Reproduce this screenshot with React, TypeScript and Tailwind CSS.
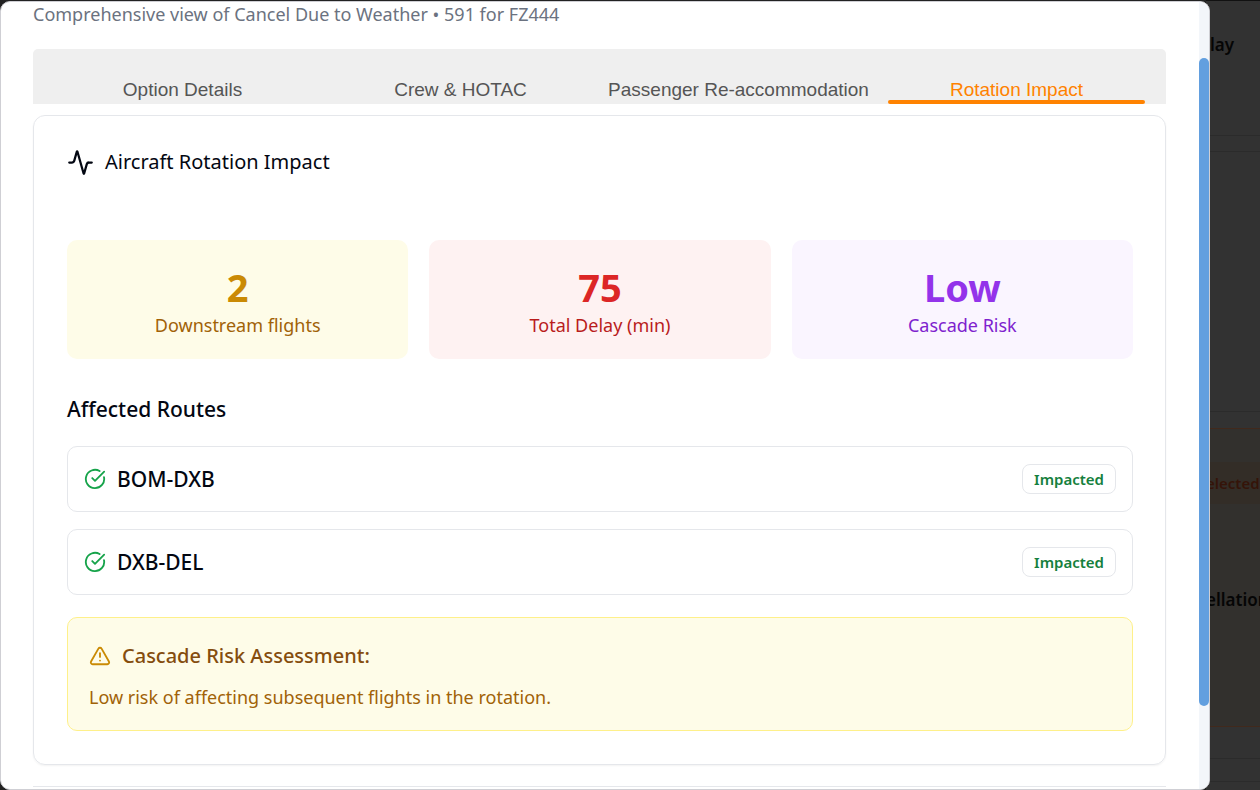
import { Activity, CircleCheckBig, TriangleAlert } from "lucide-react";

const tabs = ["Option Details", "Crew & HOTAC", "Passenger Re-accommodation", "Rotation Impact"];

const stats = [
  { value: "2", label: "Downstream flights", box: "bg-[#fefce8]", strong: "text-[#ca8a04]", soft: "text-[#a16207]" },
  { value: "75", label: "Total Delay (min)", box: "bg-[#fef2f2]", strong: "text-[#dc2626]", soft: "text-[#b91c1c]" },
  { value: "Low", label: "Cascade Risk", box: "bg-[#faf5ff]", strong: "text-[#9333ea]", soft: "text-[#7e22ce]" },
];

const routes = ["BOM-DXB", "DXB-DEL"];

function Tabs() {
  return (
    <div
      role="tablist"
      className="mt-[23px] grid grid-cols-4 gap-[21px] rounded-t-[5px] bg-[#efefef] px-[21px] pt-[30px] font-['Liberation_Sans',sans-serif] text-[19px] leading-[22px] text-[#555555]"
    >
      {tabs.map((tab, i) => {
        const active = i === 3;
        return (
          <button
            key={tab}
            type="button"
            role="tab"
            aria-selected={active}
            className={
              active
                ? "relative flex justify-center pb-[3px] whitespace-nowrap text-[#ff8200]"
                : "flex justify-center pb-[3px] whitespace-nowrap"
            }
          >
            {tab}
            {active && <span className="absolute inset-x-0 bottom-0 h-1 rounded-sm bg-[#ff8200]" />}
          </button>
        );
      })}
    </div>
  );
}

function StatCard({ stat }: { stat: (typeof stats)[number] }) {
  return (
    <div className={`rounded-[10px] px-5 pt-[27px] pb-5 text-center ${stat.box}`}>
      <div className={`text-[38px] leading-10 font-bold ${stat.strong}`}>{stat.value}</div>
      <div className={`mt-1 text-[18px] leading-7 ${stat.soft}`}>{stat.label}</div>
    </div>
  );
}

function RouteRow({ route }: { route: string }) {
  return (
    <li className="flex items-center justify-between rounded-[10px] border border-[#e5e7eb] px-4 py-4">
      <div className="flex items-center gap-[11px]">
        <CircleCheckBig className="size-[22px] text-[#16a34a]" strokeWidth={2} />
        <span className="text-[21px] leading-8 font-medium">{route}</span>
      </div>
      <span className="rounded-lg border border-[#e5e7eb] px-[11px] py-[3px] text-[15px] leading-[22px] font-semibold text-[#15803d]">
        Impacted
      </span>
    </li>
  );
}

function RotationPanel() {
  return (
    <section
      role="tabpanel"
      aria-label="Rotation Impact"
      className="mt-[11px] rounded-xl border border-[#e5e7eb] pt-[30px] pr-8 pb-[33px] pl-[33px] shadow-xs"
    >
      <h2 className="flex items-center gap-[11px] text-[20px] leading-8">
        <Activity className="size-[27px]" strokeWidth={2} />
        Aircraft Rotation Impact
      </h2>
      <div className="mt-[62px] grid grid-cols-3 gap-[21px]">
        {stats.map((s) => (
          <StatCard key={s.label} stat={s} />
        ))}
      </div>
      <h3 className="mt-[34px] text-[21px] leading-8 font-medium">Affected Routes</h3>
      <ul className="mt-[21px] flex flex-col gap-[17px]">
        {routes.map((r) => (
          <RouteRow key={r} route={r} />
        ))}
      </ul>
      <div className="mt-[22px] rounded-[10px] border border-[#fef08a] bg-[#fefce8] px-[21px] pt-[22px] pb-[19px]">
        <h4 className="flex items-center gap-[11px] text-[20px] leading-8 font-medium text-[#854d0e]">
          <TriangleAlert className="size-[22px] text-[#ca8a04]" strokeWidth={2} />
          Cascade Risk Assessment:
        </h4>
        <p className="mt-[11px] text-[18px] leading-7 text-[#a16207]">
          Low risk of affecting subsequent flights in the rotation.
        </p>
      </div>
    </section>
  );
}

function Backdrop() {
  return (
    <aside
      aria-hidden="true"
      className="-ml-1 flex w-[54px] shrink-0 flex-col border-t border-[#111111] bg-[#323232] font-semibold whitespace-nowrap text-[#050505]"
    >
      <div className="h-[135px] border-b border-[#2b2b2b] pt-8 pl-1 text-[17px] leading-6">lay</div>
      <div className="h-4 border-b border-[#2b2b2b]" />
      <div className="h-[260px] border-b border-[#2b2b2b]" />
      <div className="h-4" />
      <div className="h-[299px] border-y border-[#41291c] bg-[#32302d] pt-[33px]">
        <div className="bg-[#332d27] pt-[9px] pb-[9px] text-[15px] leading-6 text-[#351409]">elected</div>
        <div className="pt-[84px] text-[17px] leading-6">ellation</div>
      </div>
      <div className="h-8 border-b border-[#2b2b2b]" />
      <div className="h-[23px] border-b border-[#2b2b2b]" />
    </aside>
  );
}

export default function App() {
  return (
    <div className="flex h-screen overflow-hidden bg-[#222222] font-['Noto_Sans','Open_Sans',sans-serif] text-[#030712]">
      <main className="z-10 mt-px flex min-w-0 flex-1 overflow-hidden rounded-[10px] border border-[#cfcfd4] bg-white">
        <div className="min-w-0 flex-1 overflow-hidden pr-[33px] pl-8">
          <p className="text-[18px] leading-6 text-[#6b7280]">
            Comprehensive view of Cancel Due to Weather • 591 for FZ444
          </p>
          <Tabs />
          <RotationPanel />
          <div className="mt-[21px] border-t border-[#e5e7eb]" />
        </div>
        <div className="w-[10px] shrink-0 bg-[#f3f6fa] pt-14 pb-[83px]">
          <div className="h-full rounded-full bg-[#629fdf]" />
        </div>
      </main>
      <Backdrop />
    </div>
  );
}
